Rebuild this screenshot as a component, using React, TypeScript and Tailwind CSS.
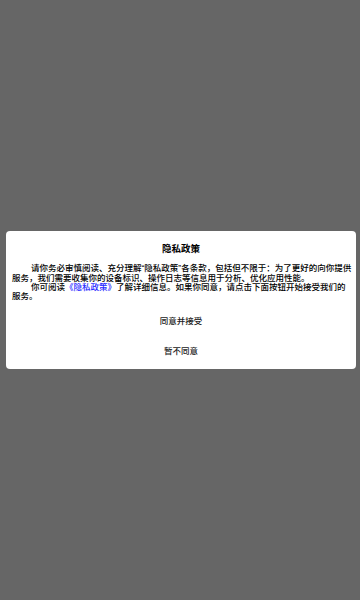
export default function App() {
  return (
    <div
      className="flex h-[600px] w-full items-center bg-[#666666] pl-[6px] pr-[4px]"
      style={{ fontFamily: '"Liberation Sans", "Noto Sans CJK SC", sans-serif' }}
    >
      <div className="w-full rounded-[4px] bg-white pt-[12px] pb-[2px]">
        <h2 className="text-center text-[9.5px] leading-[12px] font-bold text-black">
          隐私政策
        </h2>
        <div className="mt-[9px] pl-[6px] text-[8.5px] leading-[9.4px] font-medium whitespace-nowrap text-black">
          <p className="indent-[19px]">
            请你务必审慎阅读、充分理解“隐私政策”各条款，包括但不限于：为了更好的向你提供
            <br />
            服务，我们需要收集你的设备标识、操作日志等信息用于分析、优化应用性能。
          </p>
          <p className="indent-[19px]">
            你可阅读<span className="text-[#2a2aff]">《隐私政策》</span>了解详细信息。如果你同意，请点击下面按钮开始接受我们的
            <br />
            服务。
          </p>
        </div>
        <div className="mt-[5px] flex flex-col">
          <button className="h-[30px] text-center text-[8.5px] font-medium text-[#222]">同意并接受</button>
          <button className="h-[30px] text-center text-[8.5px] font-medium text-[#222]">暂不同意</button>
        </div>
      </div>
    </div>
  );
}
